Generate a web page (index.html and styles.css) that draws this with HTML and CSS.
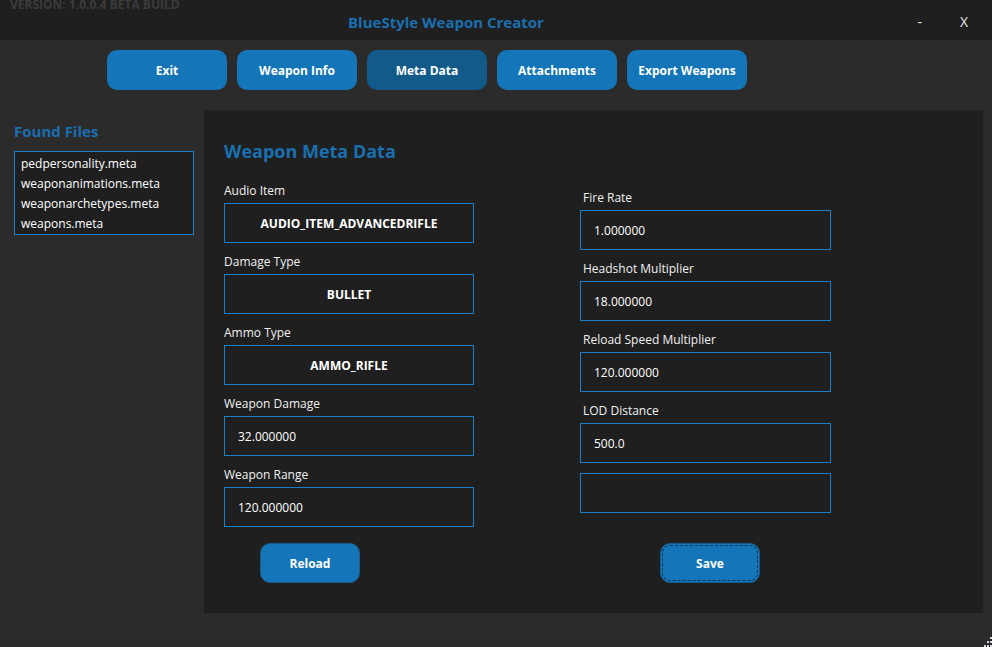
FILE: index.html
```html
<!DOCTYPE html>
<html lang="en">
<head>
  <meta charset="UTF-8">
  <title>BlueStyle Weapon Creator</title>
  <link rel="stylesheet" href="styles.css">
</head>
<body>
  <header class="title-bar">
    <span class="version">VERSION: 1.0.0.4 BETA BUILD</span>
    <span class="app-title">BlueStyle Weapon Creator</span>
    <span class="win-btn win-min">-</span>
    <span class="win-btn win-close">X</span>
  </header>

  <nav class="nav-bar">
    <button class="nav-btn">Exit</button>
    <button class="nav-btn">Weapon Info</button>
    <button class="nav-btn active">Meta Data</button>
    <button class="nav-btn">Attachments</button>
    <button class="nav-btn">Export Weapons</button>
  </nav>

  <div class="main">
    <aside class="sidebar">
      <h2 class="side-title">Found Files</h2>
      <ul class="file-list">
        <li>pedpersonality.meta</li>
        <li>weaponanimations.meta</li>
        <li>weaponarchetypes.meta</li>
        <li>weapons.meta</li>
      </ul>
    </aside>

    <section class="panel">
      <h1 class="panel-title">Weapon Meta Data</h1>
      <div class="columns">
        <div class="col col-left">
          <div class="field">
            <label>Audio Item</label>
            <div class="box center">AUDIO_ITEM_ADVANCEDRIFLE</div>
          </div>
          <div class="field">
            <label>Damage Type</label>
            <div class="box center">BULLET</div>
          </div>
          <div class="field">
            <label>Ammo Type</label>
            <div class="box center">AMMO_RIFLE</div>
          </div>
          <div class="field">
            <label>Weapon Damage</label>
            <div class="box">32.000000</div>
          </div>
          <div class="field">
            <label>Weapon Range</label>
            <div class="box">120.000000</div>
          </div>
          <button class="action-btn reload-btn">Reload</button>
        </div>

        <div class="col col-right">
          <div class="field">
            <label>Fire Rate</label>
            <div class="box">1.000000</div>
          </div>
          <div class="field">
            <label>Headshot Multiplier</label>
            <div class="box">18.000000</div>
          </div>
          <div class="field">
            <label>Reload Speed Multiplier</label>
            <div class="box">120.000000</div>
          </div>
          <div class="field">
            <label>LOD Distance</label>
            <div class="box">500.0</div>
          </div>
          <div class="box empty-box"></div>
          <button class="action-btn save-btn">Save</button>
        </div>
      </div>
    </section>
  </div>

  <footer class="status">
    <svg class="grip" width="9" height="10" viewBox="0 0 9 10">
      <rect x="7" y="0" width="2" height="2" fill="#d8d8e0"/>
      <rect x="4" y="4" width="2" height="2" fill="#d8d8e0"/>
      <rect x="7" y="4" width="2" height="2" fill="#d8d8e0"/>
      <rect x="1" y="8" width="2" height="2" fill="#d8d8e0"/>
      <rect x="4" y="8" width="2" height="2" fill="#d8d8e0"/>
      <rect x="7" y="8" width="2" height="2" fill="#d8d8e0"/>
    </svg>
  </footer>
</body>
</html>
```

FILE: styles.css
```css
body {
  margin: 0;
  padding: 0;
  width: 992px;
  height: 647px;
  overflow: hidden;
  background-color: #2b2b2b;
  font-family: 'Open Sans', 'Noto Sans', sans-serif;
  font-size: 12px;
  color: #ffffff;
  display: flex;
  flex-direction: column;
}

.title-bar {
  height: 40px;
  background-color: #1f1f1f;
  display: flex;
  align-items: center;
  flex-shrink: 0;
}

.version {
  align-self: flex-start;
  width: 348px;
  margin-top: -3px;
  padding-left: 10px;
  box-sizing: border-box;
  font-size: 12px;
  font-weight: 700;
  color: #3b3b3b;
  line-height: 16px;
}

.app-title {
  font-size: 15px;
  font-weight: 700;
  color: #1a6fb0;
  margin-top: 3px;
}

.win-btn {
  font-size: 14px;
  color: #e8e8e8;
  margin-top: 3px;
}

.win-min {
  margin-left: auto;
}

.win-close {
  margin-left: 38px;
  margin-right: 24px;
}

.nav-bar {
  display: flex;
  gap: 10px;
  padding: 10px 0 0 107px;
  height: 40px;
  flex-shrink: 0;
}

.nav-btn {
  width: 120px;
  height: 40px;
  border: none;
  border-radius: 10px;
  background-color: #1475b8;
  color: #ffffff;
  font-family: inherit;
  font-size: 12px;
  font-weight: 700;
  padding: 0;
}

.nav-btn.active {
  background-color: #115a8a;
}

.main {
  display: flex;
  margin-top: 20px;
  flex-shrink: 0;
}

.sidebar {
  width: 190px;
  padding-left: 14px;
}

.side-title {
  margin: 10px 0 9px;
  font-size: 15px;
  font-weight: 700;
  line-height: 22px;
  color: #1a6fb0;
}

.file-list {
  list-style: none;
  margin: 0;
  padding: 2px 0 0;
  width: 178px;
  border: 1px solid #1a7fc8;
  background-color: #1f1f1f;
}

.file-list li {
  line-height: 20px;
  padding-left: 6px;
  font-size: 12px;
}

.panel {
  width: 779px;
  height: 503px;
  background-color: #1f1f1f;
  padding-left: 20px;
  box-sizing: border-box;
}

.panel-title {
  margin: 29px 0 0;
  font-size: 18px;
  font-weight: 700;
  line-height: 24px;
  color: #1a6fb0;
}

.columns {
  display: flex;
  gap: 106px;
  margin-top: 9px;
}

.col {
  display: flex;
  flex-direction: column;
}

.col-left {
  width: 250px;
}

.col-right {
  width: 251px;
  padding-top: 7px;
}

.field label {
  display: block;
  margin: 10px 0 3px;
  line-height: 18px;
  font-size: 12px;
  color: #f0f0f0;
}

.col-right .field label {
  padding-left: 3px;
}

.box {
  height: 40px;
  box-sizing: border-box;
  border: 1px solid #1a7fc8;
  background-color: #1f1f1f;
  display: flex;
  align-items: center;
  padding-left: 13px;
  font-size: 12px;
  color: #ffffff;
}

.box.center {
  justify-content: center;
  padding-left: 0;
  font-weight: 700;
}

.empty-box {
  margin-top: 10px;
}

.action-btn {
  width: 100px;
  height: 40px;
  border-radius: 10px;
  background-color: #1475b8;
  border: 1px solid #1a5a8a;
  color: #ffffff;
  font-family: inherit;
  font-size: 12px;
  font-weight: 700;
  padding: 0;
}

.reload-btn {
  margin: 16px 0 0 36px;
}

.save-btn {
  margin: 30px 0 0 80px;
  outline: 1px dashed #0d3556;
  outline-offset: -3px;
}

.status {
  flex: 1;
  display: flex;
  justify-content: flex-end;
  align-items: flex-end;
}

.grip {
  display: block;
}
```
